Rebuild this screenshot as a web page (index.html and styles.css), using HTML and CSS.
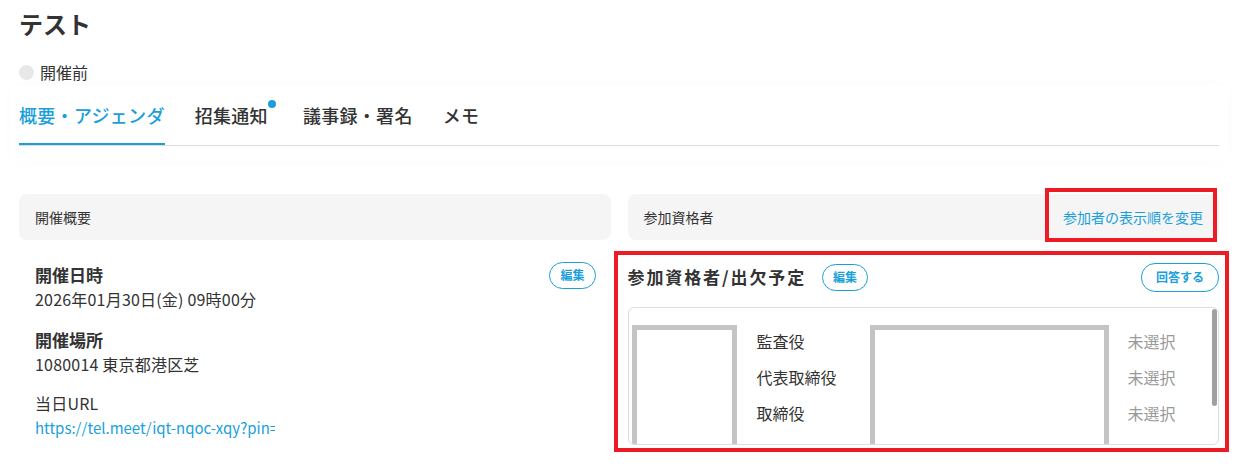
FILE: index.html
```html
<!DOCTYPE html>
<html lang="ja">
<head>
<meta charset="utf-8">
<title>テスト</title>
<link rel="stylesheet" href="styles.css">
</head>
<body>
<div class="page">
  <h1 class="title">テスト</h1>
  <div class="status"><span class="status-dot"></span>開催前</div>

  <nav class="tabs-wrap">
    <div class="tabs">
      <a class="tab active">概要・アジェンダ</a>
      <a class="tab">招集通知<span class="badge"></span></a>
      <a class="tab">議事録・署名</a>
      <a class="tab">メモ</a>
    </div>
  </nav>

  <div class="columns">
    <section class="col">
      <div class="col-head">開催概要</div>
      <div class="col-body left">
        <div class="item">
          <div class="item-head">
            <h3>開催日時</h3>
            <button class="btn">編集</button>
          </div>
          <p>2026年01月30日(金) 09時00分</p>
        </div>
        <div class="item">
          <div class="item-head">
            <h3>開催場所</h3>
          </div>
          <p>1080014 東京都港区芝</p>
        </div>
        <div class="item">
          <p class="label">当日URL</p>
          <a class="url">https://tel.meet/iqt-nqoc-xqy?pin=1234567890</a>
        </div>
      </div>
    </section>

    <section class="col">
      <div class="col-head">
        <span>参加資格者</span>
        <a class="link">参加者の表示順を変更</a>
        <span class="mark mark-link"></span>
      </div>
      <div class="col-body right">
        <div class="att-head">
          <h3>参加資格者/出欠予定</h3>
          <button class="btn edit-btn">編集</button>
          <button class="btn btn-wide">回答する</button>
        </div>
        <div class="att-list">
          <div class="att-grid">
            <div class="mask mask-photo"></div>
            <div class="role r1">監査役</div>
            <div class="role r2">代表取締役</div>
            <div class="role r3">取締役</div>
            <div class="mask mask-name"></div>
            <div class="state r1">未選択</div>
            <div class="state r2">未選択</div>
            <div class="state r3">未選択</div>
          </div>
          <span class="thumb"></span>
        </div>
      </div>
    </section>
  </div>
</div>
</body>
</html>
```

FILE: styles.css
```css
* { box-sizing: border-box; margin: 0; padding: 0; }

html, body { overflow: hidden; }

body {
  font-family: "Noto Sans CJK JP", "Noto Sans", sans-serif;
  color: #333;
  background: #fff;
}

.page { padding: 8px 40px 0 19px; }

.title { font-size: 24px; line-height: 32px; font-weight: 700; }

.status {
  display: flex; align-items: center; gap: 6px;
  margin-top: 22px; font-size: 16px; line-height: 20px;
}
.status-dot { width: 15px; height: 15px; border-radius: 50%; background: #e8e8e8; }

.tabs-wrap {
  margin: 3px -9px 0;
  padding: 7px 9px 15px;
  border-radius: 8px;
  box-shadow: 0 0 12px rgba(0, 0, 0, 0.02);
}
.tabs { display: flex; gap: 30px; border-bottom: 1px solid #dcdcdc; }
.tab {
  font-size: 18px; line-height: 26px; font-weight: 500;
  letter-spacing: 0.3px;
  padding: 10px 0 15px;
  border-bottom: 2px solid transparent;
  color: #333;
}
.tab.active { color: #1a9fdb; border-bottom-color: #1a9fdb; }
.badge {
  display: inline-block; vertical-align: top;
  width: 8px; height: 8px; margin: -2px -3px 0 0;
  border-radius: 50%; background: #1a9fdb;
}

.columns {
  display: grid; grid-template-columns: 1fr 1fr; gap: 17px;
  align-items: start;
  margin-top: 33px;
}

.col-head {
  position: relative;
  display: flex; align-items: center; justify-content: space-between;
  height: 46px; padding: 0 16px;
  background: #f5f5f5; border-radius: 8px;
  font-size: 14px;
}
.link { color: #1a9fdb; }

.mark { position: absolute; border: 4px solid #ed1c24; pointer-events: none; }
.mark-link { top: -6px; height: 54px; right: 2px; width: 172px; }

.btn {
  font-family: inherit; font-size: 12px; font-weight: 700;
  color: #1a9fdb; background: #fff;
  border: 1.5px solid #1a9fdb; border-radius: 14px;
  height: 27px; padding: 0 10px; line-height: 1;
}
.btn-wide { padding: 0 14px; height: 29px; }

.col-body.left { padding: 22px 15px 0 16px; }
.item + .item { margin-top: 17px; }
.item-head { display: flex; align-items: center; justify-content: space-between; height: 26px; }
.item h3 { font-size: 17px; line-height: 26px; font-weight: 700; }
.item p { font-size: 16px; line-height: 22px; letter-spacing: 0.2px; }
.item .label { margin-bottom: 3px; }
.url {
  display: block; width: 240px; overflow: hidden; white-space: nowrap;
  font-size: 15px; line-height: 22px; color: #1a9fdb;
}

/* right panel, framed by the red annotation border */
.col-body.right {
  margin: 11px -10px 0 -14px;
  padding: 7px 6px 3px 10px;
  border: 4px solid #ed1c24;
}
.att-head { display: flex; align-items: center; height: 30px; }
.att-head h3 { font-size: 17px; font-weight: 700; line-height: 26px; letter-spacing: 1.9px; }
.edit-btn { margin-left: 16px; }
.att-head .btn-wide { margin-left: auto; }

.att-list {
  position: relative;
  margin-top: 15px; height: 138px;
  border: 1px solid #dddddd; border-radius: 6px;
  overflow: hidden;
}
.thumb {
  position: absolute; top: 1px; right: 1px;
  width: 5px; height: 97px;
  border-radius: 3px; background: #a0a0a0;
}

.att-grid {
  display: grid;
  grid-template-columns: 105px 133px 239px auto;
  grid-template-rows: 36px 36px 36px;
  padding: 15px 0 0 3px;
  font-size: 16px;
}
.mask {
  grid-row: 1 / 4; align-self: start;
  margin-top: 2px; height: 176px;
  border: 5px solid #c4c4c4; background: #fff;
}
.mask-photo { grid-column: 1; }
.mask-name { grid-column: 3; }
.role { grid-column: 2; display: flex; align-items: center; padding-left: 20px; }
.state { grid-column: 4; display: flex; align-items: center; padding-left: 19px; color: #9a9a9a; }
.r1 { grid-row: 1; }
.r2 { grid-row: 2; }
.r3 { grid-row: 3; }
```
